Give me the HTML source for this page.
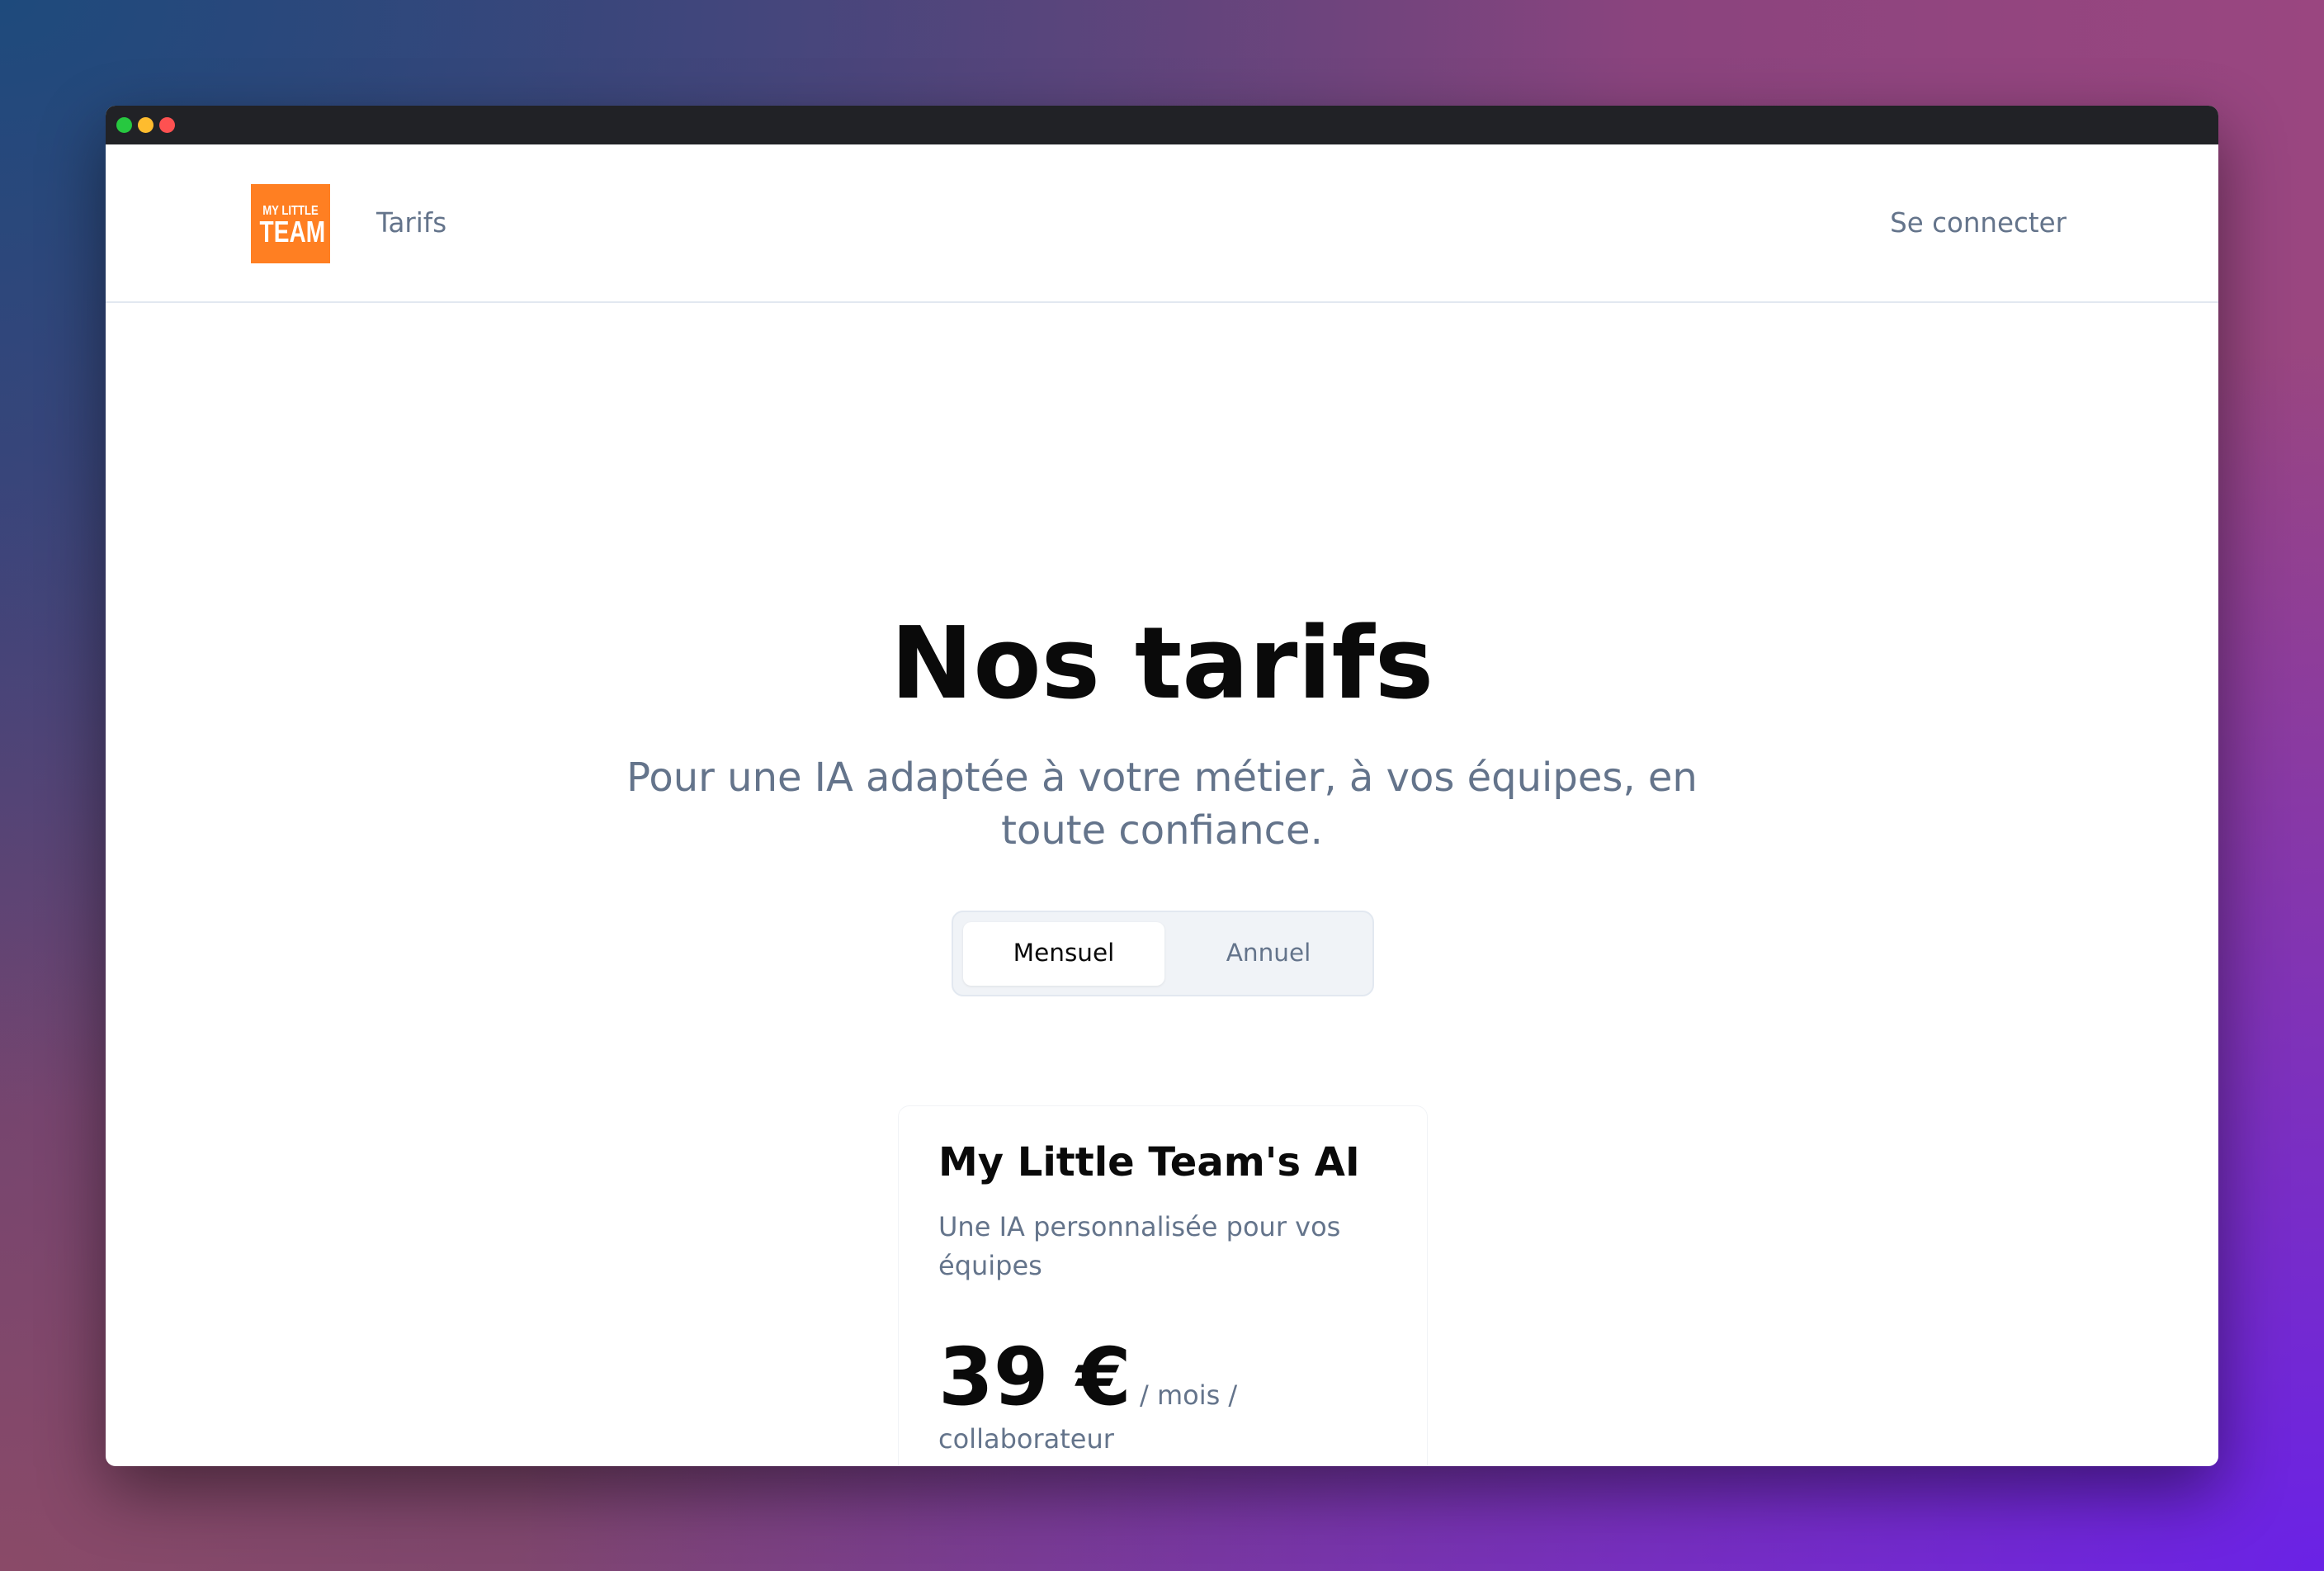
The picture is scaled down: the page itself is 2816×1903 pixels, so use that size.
<!DOCTYPE html>
<html><head><meta charset="utf-8"><style>
html,body{margin:0;padding:0}
body{width:2816px;height:1903px;overflow:hidden;position:relative;font-family:"DejaVu Sans","Liberation Sans",sans-serif;
background:
radial-gradient(ellipse at 100% 100%, #6a22e6 0%, rgba(106,34,230,0) 55%),
radial-gradient(ellipse at 0% 0%, #1e4a7c 0%, rgba(30,74,124,0) 50%),
radial-gradient(ellipse at 0% 100%, #8a4a68 0%, rgba(138,74,104,0) 50%),
linear-gradient(90deg,#5a3e78 0%,#8a447e 70%,#9a4680 100%);}
.win{position:absolute;left:128px;top:128px;width:2560px;height:1648px;border-radius:12px;overflow:hidden;background:#fff;box-shadow:0 30px 80px rgba(0,0,0,.45)}
.bar{position:absolute;left:0;top:0;width:100%;height:47px;background:#212226}
.dot{position:absolute;top:14px;width:19px;height:19px;border-radius:50%}
.t{position:absolute;white-space:nowrap}
</style></head><body>
<div class="win">
 <div class="bar">
  <div class="dot" style="left:13px;background:#27c840"></div>
  <div class="dot" style="left:39px;background:#febc2e"></div>
  <div class="dot" style="left:65px;background:#fe5151"></div>
 </div>
 <div style="position:absolute;left:176px;top:95px;width:96px;height:96px;background:#ff7f22;color:#fff;font-family:'Liberation Sans',sans-serif;font-weight:bold;text-align:center">
  <div style="position:absolute;left:0;right:0;top:25px;font-size:16px;line-height:16px;transform:scaleX(0.82)">MY LITTLE</div>
  <div style="position:absolute;left:0;right:0;top:40px;font-size:36px;line-height:36px;transform:scaleX(0.78)">TEAM</div>
 </div>
 <div class="t" style="left:328px;top:118px;font-size:32.5px;line-height:48px;color:#64748b">Tarifs</div>
 <div class="t" style="right:184px;top:118px;font-size:32.5px;line-height:48px;color:#64748b">Se connecter</div>
 <div style="position:absolute;left:0;top:237px;width:100%;height:2px;background:#e2e8f0"></div>
 <div class="t" style="left:0;width:100%;text-align:center;top:602px;font-size:120px;line-height:150px;font-weight:bold;color:#0a0a0a">Nos tarifs</div>
 <div style="position:absolute;left:560px;width:1440px;top:782px;text-align:center;font-size:48px;line-height:64px;color:#64748b">Pour une IA adaptée à votre métier, à vos équipes, en<br>toute confiance.</div>
 <div style="position:absolute;left:1025px;top:975px;width:508px;height:100px;border:2px solid #e2e8f0;border-radius:14px;background:#f0f3f7"></div>
 <div style="position:absolute;left:1039px;top:989px;width:244px;height:77px;border-radius:10px;background:#fff;box-shadow:0 1px 3px rgba(0,0,0,.08)"></div>
 <div class="t" style="left:1039px;width:244px;text-align:center;top:1004px;font-size:29.5px;line-height:44px;color:#0a0a0a">Mensuel</div>
 <div class="t" style="left:1287px;width:244px;text-align:center;top:1004px;font-size:29.5px;line-height:44px;color:#64748b">Annuel</div>
 <div style="position:absolute;left:960px;top:1211px;width:640px;height:500px;border:1px solid #f1f3f6;border-radius:14px"></div>
 <div class="t" style="left:1009px;top:1250px;font-size:48px;line-height:60px;font-weight:bold;color:#0a0a0a">My Little Team's AI</div>
 <div style="position:absolute;left:1009px;top:1335px;width:520px;font-size:32px;line-height:47px;color:#64748b">Une IA personnalisée pour vos équipes</div>
 <div style="position:absolute;left:1009px;top:1490px;width:520px;color:#64748b;font-size:32px;line-height:50px"><span style="font-size:96px;font-weight:bold;color:#0a0a0a;line-height:100px">39 €</span> / mois / collaborateur</div>
</div>
</body></html>
